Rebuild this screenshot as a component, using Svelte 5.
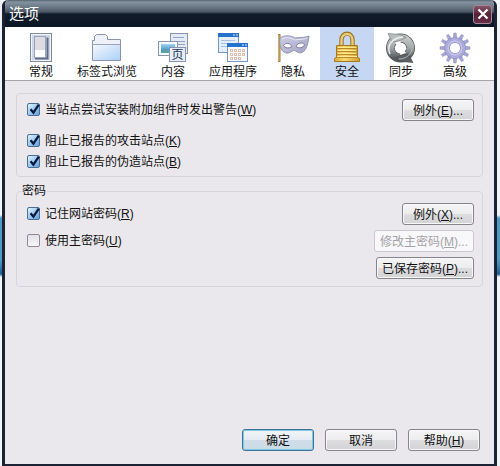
<script>
  const tabs = [
    { id: 'general', label: '常规' },
    { id: 'tabs', label: '标签式浏览' },
    { id: 'content', label: '内容' },
    { id: 'apps', label: '应用程序' },
    { id: 'privacy', label: '隐私' },
    { id: 'security', label: '安全' },
    { id: 'sync', label: '同步' },
    { id: 'advanced', label: '高级' }
  ];

  // angles of the gear's teeth
  const teeth = Array.from({ length: 12 }, (_, i) => i * 30);

  let active = $state('security');
  let warnInstall = $state(true);
  let blockAttack = $state(true);
  let blockForgery = $state(true);
  let remember = $state(true);
  let useMaster = $state(false);
</script>

{#snippet tick()}
  <svg class="tick" viewBox="0 0 15 15" aria-hidden="true">
    <path d="M3.5 7.2 6.4 10.6 11.8 2.6" fill="none" stroke="#0b1a3c" stroke-width="2.3" />
  </svg>
{/snippet}

{#snippet icon(id)}
  <svg class="icon" viewBox="0 0 30 30" aria-hidden="true">
    {#if id === 'general'}
      <rect x="4.5" y=".5" width="21" height="28" fill="#cfd6e6" stroke="#7f899c" />
      <rect x="5.5" y="1.5" width="19" height="26" fill="none" stroke="#f1f4fa" />
      <path d="M9 25.500H21.500V4.500" fill="none" stroke="#5f6c88" stroke-width="2" />
      <rect x="8.500" y="3.500" width="11" height="21" fill="#fff" stroke="#98a2b8" />
      <rect x="9" y="4" width="10" height="13" fill="#dcdce2" />
    {:else if id === 'tabs'}
      <path d="M.5 27.5V7.5H2.500V3.500L4.500 1.500H13.500L15.500 3.500V6.500H28.500V27.500Z" fill="#eef1f8" stroke="#8994ab" />
      <path d="M1 11.500H28V27H1Z" fill="url(#folder)" />
      <path d="M.5 11.500H28.500" stroke="#9aa4ba" />
    {:else if id === 'content'}
      <rect x="12.500" y=".5" width="17" height="20" fill="#e3eaf6" stroke="#8795b0" />
      <path d="M15 4.500H26M20 8.500H27M20 11.500H27" stroke="#93a2be" />
      <rect x=".5" y="8.500" width="19" height="14" fill="#f6f9fd" stroke="#8795b0" />
      <rect x="3" y="11" width="14" height="9" fill="url(#sea)" />
      <path d="M3 18 8 16 12 18 17 17V20H3Z" fill="#58a3a4" />
      <rect x="11.500" y="14.500" width="16" height="14" fill="#e6edf7" stroke="#8795b0" />
      <text x="19.500" y="26" text-anchor="middle">页</text>
    {:else if id === 'apps'}
      <rect x=".5" y=".5" width="20" height="19" fill="#e3edfb" stroke="#7398c8" />
      <path d="M0 0H21V4H0Z" fill="#2671cc" />
      <path d="M3 7.500H17M3 10.500H9M3 13.500H9" stroke="#a9c0df" />
      <path d="M15 2H17M18 2H20" stroke="#d9eaff" />
      <rect x="9.500" y="10.500" width="20" height="18" fill="#fbfcff" stroke="#7398c8" />
      <path d="M9 10H30V14H9Z" fill="#2671cc" />
      <path d="M24 12H26M27 12H29" stroke="#d9eaff" />
      <path d="M12 17.500H27M12 21.500H27M12 25.500H23" stroke="#e0bfb3" stroke-width="3" stroke-dasharray="3 1" />
      <path d="M13 17.500H27M13 21.500H27M13 25.500H23" stroke="#fffaf8" stroke-dasharray="1 3" />
    {:else if id === 'privacy'}
      <path d="M1.300 1V29" stroke="#a07c3c" stroke-width="2.400" />
      <path d="M.9 2V28" stroke="#e3c680" />
      <path d="M2 5C6 2 12 2 17 5C22 4 26 5 31 3C30 10 29 17 24 19.500C20 21 18 17.500 16 17.500C13.500 17.500 12 21 8 20C3 19 1 12 2 5Z" fill="url(#mask)" stroke="#8586a8" stroke-width=".8" />
      <path d="M5.500 12.500C8 9 12 10 14 13.500C11 15.500 7 15.500 5.500 12.500ZM18 13.500C20 9.500 24 9 26.500 11.500C25 15.500 21 15.500 18 13.500Z" fill="#fff" stroke="#77789d" />
      <path d="M4 6C9 3.500 13 5 17 7C21 6 25 7 29 5" fill="none" stroke="#e6e6f5" />
    {:else if id === 'security'}
      <path d="M9.500 15V7C9.500 -1.500 20.500 -1.500 20.500 7V15" fill="none" stroke="#987423" stroke-width="4.400" />
      <path d="M9.500 15V7C9.500 -1 20.500 -1 20.500 7V15" fill="none" stroke="#ebcd78" stroke-width="2.400" />
      <path d="M4.500 12.500H25.500V24L27.500 25.500V28.500H2.500V25.500L4.500 24Z" fill="url(#gold)" stroke="#a5781d" />
      <path d="M5 15.500H25M5 18.500H25M5 21.500H25M4 24.500H26" stroke="#b98928" />
      <path d="M6 14.500H24M6 17.500H24M6 20.500H24M5 23.500H25" stroke="#ffe98f" />
    {:else if id === 'sync'}
      <circle cx="14.500" cy="15" r="10" fill="none" stroke="#53575a" stroke-width="9" />
      <circle cx="14.500" cy="15" r="10" fill="none" stroke="url(#steel)" stroke-width="7.500" />
      <path d="M2 .5 14 1.500 20 4.500 14 7.500 8 9 5 7Z" fill="#b9bcbe" stroke="#74787b" stroke-width=".6" />
      <path d="M27 29.500 15 28.500 9 25.500 15 22 22 21 24 24Z" fill="#5d6164" stroke="#44484b" stroke-width=".6" />
      <path d="M9 9.500 15 8 14 11 19 12 20.500 16 18 17.500 20 20 14 22 14.500 19 10 18.500 8.500 14 11 12.500Z" fill="#fff" />
      <path d="M4 21C0 12 7 4.500 17 4" fill="none" stroke="#eceded" stroke-width="1.500" />
      <path d="M25 9C29 18 22 26 13 26" fill="none" stroke="#b8babc" />
    {:else}
      {#each teeth as angle}
        <path d="M13.300 5.500 13.800 0H16.200L16.700 5.500Z" fill="#a5a5d6" stroke="#8989c0" stroke-width=".5" transform="rotate({angle} 15 15)" />
      {/each}
      <circle cx="15" cy="15" r="8" fill="none" stroke="#8a8ac2" stroke-width="5.600" />
      <circle cx="15" cy="15" r="8" fill="none" stroke="#ababdc" stroke-width="4.600" />
      <circle cx="15" cy="15" r="6.800" fill="none" stroke="#c9c9ed" stroke-width="1.200" />
    {/if}
  </svg>
{/snippet}

<svg class="defs" width="0" height="0" aria-hidden="true">
  <defs>
    <linearGradient id="folder" x1="0" y1="0" x2="1" y2="1">
      <stop offset="0" stop-color="#f5f9ff" /><stop offset="1" stop-color="#acd0f6" />
    </linearGradient>
    <linearGradient id="sea" x1="0" y1="0" x2="0" y2="1">
      <stop offset="0" stop-color="#a2d4ee" /><stop offset="1" stop-color="#207db5" />
    </linearGradient>
    <linearGradient id="mask" x1="0" y1="0" x2="1" y2="1">
      <stop offset="0" stop-color="#cfd0e4" /><stop offset="1" stop-color="#a0a1c2" />
    </linearGradient>
    <linearGradient id="gold" x1="0" y1="0" x2="1" y2="0">
      <stop offset="0" stop-color="#ddab39" /><stop offset=".4" stop-color="#f7d970" /><stop offset="1" stop-color="#d09d32" />
    </linearGradient>
    <linearGradient id="steel" x1="0" y1="0" x2="0" y2="1">
      <stop offset="0" stop-color="#c4c7c8" /><stop offset=".5" stop-color="#a0a4a6" /><stop offset="1" stop-color="#585c5f" />
    </linearGradient>
  </defs>
</svg>

<main class="desktop">
  <section class="window">
    <header class="titlebar">
      <h1>选项</h1>
      <button class="close" aria-label="关闭">
        <svg viewBox="0 0 12 12" aria-hidden="true">
          <path d="M1.5 1.5 10.5 10.5M10.5 1.5 1.5 10.5" stroke="#fff" stroke-width="2.2" />
        </svg>
      </button>
    </header>

    <nav class="toolbar">
      {#each tabs as tab}
        <button class="tab" class:active={active === tab.id} onclick={() => (active = tab.id)}>
          {@render icon(tab.id)}
          <span>{tab.label}</span>
        </button>
      {/each}
    </nav>

    <div class="panel">
      <div class="group sites">
        <div class="row">
          <label class="option">
            <span class="box"><input type="checkbox" bind:checked={warnInstall} />{@render tick()}</span>
            <span>当站点尝试安装附加组件时发出警告(<u>W</u>)</span>
          </label>
          <button class="btn">例外(<u>E</u>)...</button>
        </div>
        <label class="option">
          <span class="box"><input type="checkbox" bind:checked={blockAttack} />{@render tick()}</span>
          <span>阻止已报告的攻击站点(<u>K</u>)</span>
        </label>
        <label class="option">
          <span class="box"><input type="checkbox" bind:checked={blockForgery} />{@render tick()}</span>
          <span>阻止已报告的伪造站点(<u>B</u>)</span>
        </label>
      </div>

      <fieldset class="group passwords">
        <legend>密码</legend>
        <div class="row">
          <label class="option">
            <span class="box"><input type="checkbox" bind:checked={remember} />{@render tick()}</span>
            <span>记住网站密码(<u>R</u>)</span>
          </label>
          <button class="btn">例外(<u>X</u>)...</button>
        </div>
        <div class="row">
          <label class="option">
            <span class="box"><input type="checkbox" bind:checked={useMaster} />{@render tick()}</span>
            <span>使用主密码(<u>U</u>)</span>
          </label>
          <button class="btn" disabled={!useMaster}>修改主密码(<u>M</u>)...</button>
        </div>
        <div class="row end">
          <button class="btn">已保存密码(<u>P</u>)...</button>
        </div>
      </fieldset>

      <footer class="actions">
        <button class="btn default">确定</button>
        <button class="btn">取消</button>
        <button class="btn">帮助(<u>H</u>)</button>
      </footer>
    </div>
  </section>
</main>

<style>
  :global(body) {
    margin: 0;
  }

  .defs {
    position: absolute;
  }

  .desktop {
    display: flex;
    box-sizing: border-box;
    min-height: 100vh;
    padding: 0 3px 0 2px;
    background: linear-gradient(#eef4f8 0 215px, #4a9cc4 218px 260px, #1d5f96 274px, #eef4f8 277px);
    color: #111;
    font: 12px/16px "Liberation Sans", "Noto Sans CJK SC", sans-serif;
  }

  button {
    margin: 0;
    font: inherit;
    color: inherit;
  }

  u {
    text-underline-offset: 1px;
  }

  .window {
    display: flex;
    flex: 1;
    flex-direction: column;
    border: solid #1a2233;
    border-width: 0 3px 2px;
    border-radius: 6px 6px 0 0;
    background: #ebe8ed;
    overflow: hidden;
  }

  .titlebar {
    display: flex;
    align-items: center;
    justify-content: space-between;
    box-sizing: border-box;
    height: 27px;
    padding: 1px 2px 0 4px;
    background: linear-gradient(#56626f 0, #8593a0 2px, #66737f 8px, #4c5865 12px, #111c2b 14px, #0c1625 100%);
  }

  h1 {
    margin: 0;
    color: #fff;
    font-size: 15px;
    line-height: 20px;
    font-weight: 400;
  }

  .close {
    display: grid;
    place-items: center;
    width: 19px;
    height: 19px;
    padding: 0;
    border: 1px solid #a58596;
    border-radius: 3px;
    background: linear-gradient(#84566a, #542238 50%, #682e46);
  }

  .close svg {
    width: 12px;
    height: 12px;
  }

  .toolbar {
    display: flex;
    padding: 0 9px;
    border-bottom: 1px solid #a5a4a8;
    background: #fff;
  }

  .tab {
    display: flex;
    flex-direction: column;
    align-items: center;
    min-width: 54px;
    padding: 6px 9px 0;
    border: 0;
    background: none;
    white-space: nowrap;
  }

  .tab.active {
    background: #c5d7f2;
  }

  .icon {
    width: 30px;
    height: 30px;
    margin-bottom: 1px;
    overflow: visible;
  }

  .icon text {
    fill: #23344f;
    font-size: 12px;
  }

  .panel {
    display: flex;
    flex: 1;
    flex-direction: column;
    padding: 12px 11px 13px;
  }

  .group {
    display: flex;
    flex-direction: column;
    min-width: 0;
    margin: 0;
    padding: 5px 8px 7px 10px;
    border: 1px solid #d6d5dc;
    border-radius: 4px;
  }

  .sites {
    gap: 5px;
    padding-bottom: 6px;
  }

  .sites .row {
    margin-bottom: 7px;
  }

  .passwords {
    gap: 5px;
    margin-top: 6px;
    padding-top: 4px;
  }

  legend {
    margin-left: -6px;
    padding: 0 1px;
  }

  .row {
    display: flex;
    align-items: center;
    justify-content: space-between;
  }

  .row.end {
    justify-content: flex-end;
  }

  .option {
    display: flex;
    align-items: center;
    gap: 4px;
  }

  .box {
    display: grid;
    width: 14px;
    height: 14px;
  }

  .box > :global(*) {
    grid-area: 1 / 1;
  }

  input {
    appearance: none;
    box-sizing: border-box;
    width: 13px;
    height: 13px;
    margin: 0;
    border: 1px solid #8b8b94;
    border-radius: 2px;
    background: linear-gradient(#e3e1e6, #f7f5f8);
  }

  input:checked {
    border-color: #4c6d91;
    background: linear-gradient(135deg, #e0f2ff, #8fc4ee 60%, #5d9fd8);
  }

  .tick {
    width: 15px;
    height: 15px;
    margin-top: -1px;
    visibility: hidden;
    pointer-events: none;
  }

  input:checked + .tick {
    visibility: visible;
  }

  .btn {
    box-sizing: border-box;
    min-width: 72px;
    height: 22px;
    padding: 1px 5px 0;
    border: 1px solid #85848a;
    border-radius: 3px;
    background: linear-gradient(#f5f5f6, #ececee 50%, #dddde0 52%, #d3d3d6);
    box-shadow: inset 0 0 0 1px #f8f8fa;
    line-height: 18px;
    white-space: nowrap;
  }

  .btn:disabled {
    border-color: #c9c8cd;
    background: #f8f7f9;
    color: #a4a3a8;
  }

  .btn.default {
    border-color: #3f7594;
    background: linear-gradient(#f1f5f8, #e4ebf1 50%, #d0dde8 52%, #cbdce8);
    box-shadow: inset 0 0 0 1px #82c6e4;
  }

  .actions {
    display: flex;
    justify-content: flex-end;
    gap: 11px;
    margin-top: auto;
    padding-right: 3px;
  }
</style>
